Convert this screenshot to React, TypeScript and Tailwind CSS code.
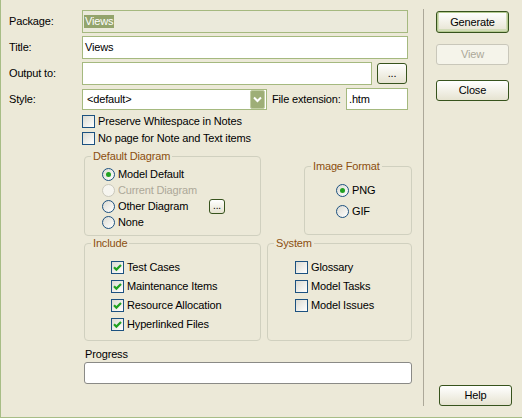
import type { ReactNode } from "react";

const FONT = "font-['Liberation_Sans',Arial,sans-serif] text-[11px] leading-[13px] tracking-[-0.15px] text-black";

function Check({ checked }: { checked?: boolean }) {
  return (
    <span className="flex h-[13px] w-[13px] shrink-0 items-center justify-center border border-[#1c5180] bg-gradient-to-br from-[#dcdbd2] to-white">
      {checked && (
        <svg width="9" height="9" viewBox="0 0 9 9">
          <path d="M1 4.2 L3.4 6.6 L8 2" fill="none" stroke="#21a121" strokeWidth="2.2" />
        </svg>
      )}
    </span>
  );
}

function Radio({ checked, disabled }: { checked?: boolean; disabled?: boolean }) {
  return (
    <span
      className={
        "flex h-[13px] w-[13px] shrink-0 items-center justify-center rounded-full border " +
        (disabled
          ? "border-[#cac8bb] bg-[#f6f5ef]"
          : "border-[#1c5180] bg-gradient-to-br from-[#dcdbd2] to-white")
      }
    >
      {checked && <span className="h-[5px] w-[5px] rounded-full bg-[#21a121]" />}
    </span>
  );
}

function Btn({ children, className = "", disabled, def }: { children: ReactNode; className?: string; disabled?: boolean; def?: boolean }) {
  return (
    <div
      className={
        "flex items-center justify-center rounded-[3px] border " +
        (disabled
          ? "border-[#c9c7ba] bg-[#f5f4ea] text-[#aca899] "
          : "border-[#37531d] bg-gradient-to-b from-white to-[#e6e3d1] ") +
        (def ? "shadow-[inset_0_0_0_1px_#b6cb92,inset_0_-1px_0_2px_#d2dcb8] " : "") +
        className
      }
    >
      {children}
    </div>
  );
}

function Group({ title, className, children }: { title: string; className: string; children: ReactNode }) {
  return (
    <fieldset className={"m-0 min-w-0 rounded-[4px] border border-[#d0d0bf] p-0 " + className}>
      <legend className="ml-[6px] px-[2px] text-[#8b4f0f]">{title}</legend>
      {children}
    </fieldset>
  );
}

function CheckRow({ label, checked }: { label: string; checked?: boolean }) {
  return (
    <div className="flex h-[19px] items-center gap-[3px]">
      <Check checked={checked} />
      <span>{label}</span>
    </div>
  );
}

function RadioRow({ label, checked, disabled, labelW }: { label: string; checked?: boolean; disabled?: boolean; labelW?: string }) {
  return (
    <div className="flex h-[16px] items-center gap-[3px]">
      <Radio checked={checked} disabled={disabled} />
      <span className={(disabled ? "text-[#aca899] " : "") + (labelW ?? "")}>{label}</span>
    </div>
  );
}

export default function App() {
  return (
    <div className={"h-[418px] w-[522px] border-b border-l border-[#a7bd86] bg-[#ece9d8] " + FONT}>
      <div className="flex h-[417px]">
        {/* form column */}
        <div className="w-[411px] shrink-0 pt-[10px]">
          <div className="flex h-[23px] items-center">
            <span className="w-[81px] pl-[8px]">Package:</span>
            <div className="flex h-[23px] w-[326px] items-center border border-[#a5b97f] bg-[#ebeadb] pl-[1px]">
              <span className="bg-[#93a46c] px-[1px] text-white">Views</span>
            </div>
          </div>
          <div className="mt-[3px] flex h-[23px] items-center">
            <span className="w-[81px] pl-[8px]">Title:</span>
            <div className="flex h-[23px] w-[326px] items-center border border-[#a5b97f] bg-white pl-[2px]">Views</div>
          </div>
          <div className="mt-[3px] flex h-[23px] items-center">
            <span className="w-[81px] pl-[8px]">Output to:</span>
            <div className="h-[23px] w-[290px] border border-[#a5b97f] bg-white" />
            <Btn className="ml-[5px] h-[21px] w-[30px]">...</Btn>
          </div>
          <div className="mt-[3px] flex h-[22px] items-center">
            <span className="w-[81px] pl-[8px]">Style:</span>
            <div className="flex h-[21px] w-[185px] items-center border border-[#a5b97f] bg-white pl-[4px] pr-[1px]">
              <span className="flex-1">&lt;default&gt;</span>
              <span className="flex h-[19px] w-[15px] items-center justify-center rounded-[2px] border border-[#c3cfa5] bg-[#9eae77]">
                <svg width="9" height="7" viewBox="0 0 9 7">
                  <path d="M1 1.5 L4.5 5 L8 1.5" fill="none" stroke="white" strokeWidth="2" />
                </svg>
              </span>
            </div>
            <span className="ml-[5px] w-[74px]">File extension:</span>
            <div className="flex h-[22px] w-[62px] items-center border border-[#a5b97f] bg-white pl-[2px]">.htm</div>
          </div>
          <div className="ml-[81px] mt-[5px] flex h-[13px] items-center gap-[3px]">
            <Check />
            <span>Preserve Whitespace in Notes</span>
          </div>
          <div className="ml-[81px] mt-[4px] flex h-[13px] items-center gap-[3px]">
            <Check />
            <span>No page for Note and Text items</span>
          </div>

          <div className="ml-[83px] mt-[5px] flex items-start">
            <Group title="Default Diagram" className="h-[86px] w-[177px]">
              <div className="pl-[17px] pt-[3px]">
                <RadioRow label="Model Default" checked />
                <RadioRow label="Current Diagram" disabled />
                <div className="flex items-center">
                  <RadioRow label="Other Diagram" labelW="w-[91px]" />
                  <Btn className="h-[15px] w-[16px] text-[10px] leading-[10px]">...</Btn>
                </div>
                <RadioRow label="None" />
              </div>
            </Group>
            <Group title="Image Format" className="ml-auto mt-[10px] h-[75px] w-[108px]">
              <div className="flex flex-col gap-[5px] pl-[31px] pt-[9px]">
                <RadioRow label="PNG" checked />
                <RadioRow label="GIF" />
              </div>
            </Group>
          </div>

          <div className="ml-[83px] mt-[1px] flex gap-[6px]">
            <Group title="Include" className="h-[104px] w-[177px]">
              <div className="pl-[26px] pt-[8px]">
                <CheckRow label="Test Cases" checked />
                <CheckRow label="Maintenance Items" checked />
                <CheckRow label="Resource Allocation" checked />
                <CheckRow label="Hyperlinked Files" checked />
              </div>
            </Group>
            <Group title="System" className="h-[104px] w-[145px]">
              <div className="pl-[27px] pt-[8px]">
                <CheckRow label="Glossary" />
                <CheckRow label="Model Tasks" />
                <CheckRow label="Model Issues" />
              </div>
            </Group>
          </div>

          <div className="ml-[84px] mt-[7px]">Progress</div>
          <div className="ml-[83px] mt-[1px] h-[22px] w-[328px] rounded-[3px] border border-[#8a8a86] bg-white" />
        </div>

        {/* separator */}
        <div className="mb-[11px] ml-[11px] mt-[9px] w-px bg-[#aca899]" />

        {/* buttons */}
        <div className="ml-[12px] flex flex-col pb-[11px] pt-[11px]">
          <Btn def className="h-[22px] w-[73px]">Generate</Btn>
          <Btn disabled className="mt-[11px] h-[21px] w-[73px]">View</Btn>
          <Btn className="mt-[15px] h-[21px] w-[73px]">Close</Btn>
          <Btn className="ml-[3px] mt-auto h-[21px] w-[73px]">Help</Btn>
        </div>
      </div>
    </div>
  );
}
